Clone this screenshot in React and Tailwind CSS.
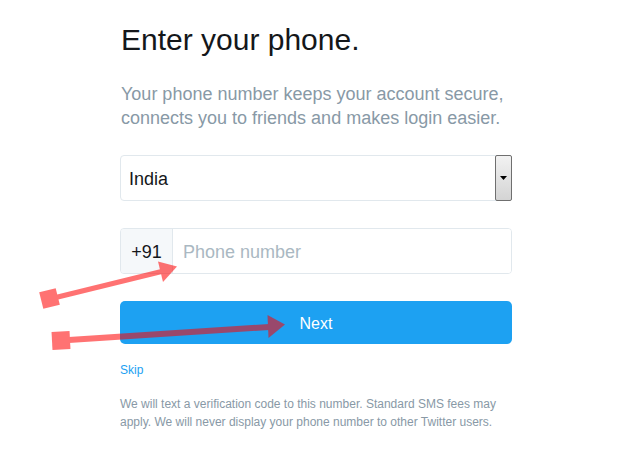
import React from 'react';

/**
 * PhoneStep
 * "Enter your phone" onboarding step with annotation arrows on top
 */
const Arrows = () => (
  <svg
    className="absolute inset-0 pointer-events-none"
    width="617"
    height="465"
    viewBox="0 0 617 465"
  >
    <g opacity="0.55" fill="#ff0000" stroke="none">
      {/* upper arrow */}
      <g>
        <rect x="41" y="290" width="17" height="17" transform="rotate(-14 49.5 298.5)" />
        <path d="M49 296.5 L161 269 L162.2 274 L50.2 301.5 Z" />
        <polygon points="177,266.5 158,261.5 163,282" />
      </g>
      {/* lower arrow */}
      <g>
        <rect x="52" y="331.5" width="18" height="18" transform="rotate(-3 61 340.5)" />
        <path d="M61 337.5 L269 324 L269.4 330 L61.4 343.5 Z" />
        <polygon points="285,324.5 267.5,315 268.5,338" />
      </g>
    </g>
  </svg>
);

const App = () => {
  return (
    <div
      className="relative w-[617px] h-[465px] bg-white overflow-hidden"
      style={{ fontFamily: '"Liberation Sans", Arial, sans-serif' }}
    >
      <div className="ml-[120px] w-[392px] pt-[22px] flex flex-col">
        <h1 className="text-[30px] leading-[36px] text-[#14171a] pl-px">
          Enter your phone.
        </h1>

        <p className="mt-[24px] text-[18px] leading-[24px] text-[#8899a6] pl-px">
          Your phone number keeps your account secure, connects you to friends and makes login easier.
        </p>

        {/* Country select */}
        <div className="mt-[25px] h-[46px] flex items-stretch border border-[#e1e8ed] rounded-[4px]">
          <div className="flex-1 flex items-center pl-[8px] pt-[2px] text-[18px] text-[#14171a]">
            India
          </div>
          <div className="w-[17px] -my-px -mr-px flex items-center justify-center border border-[#6f6f6f] rounded-[2px] bg-gradient-to-b from-[#f2f2f2] to-[#d4d4d4]">
            <svg width="7" height="4" viewBox="0 0 7 4">
              <polygon points="0,0 7,0 3.5,4" fill="#000" />
            </svg>
          </div>
        </div>

        {/* Phone number */}
        <div className="mt-[27px] h-[46px] flex items-stretch border border-[#e1e8ed] rounded-[4px] overflow-hidden">
          <div className="w-[52px] flex items-center justify-center pt-[2px] bg-[#f5f8fa] border-r border-[#e1e8ed] text-[18px] text-[#14171a]">
            +91
          </div>
          <input
            type="tel"
            placeholder="Phone number"
            className="flex-1 pl-[10px] pt-[2px] text-[18px] text-[#14171a] placeholder:text-[#aab8c2] outline-none bg-white"
          />
        </div>

        <button className="mt-[27px] h-[43px] pt-[2px] rounded-[5px] bg-[#1da1f2] text-white text-[16px] flex items-center justify-center">
          Next
        </button>

        <a href="#" className="mt-[18px] text-[12px] leading-[16px] text-[#1da1f2] self-start">
          Skip
        </a>

        <p className="mt-[17px] text-[12px] leading-[18px] text-[#8899a6]">
          We will text a verification code to this number. Standard SMS fees may apply. We will never display your phone number to other Twitter users.
        </p>
      </div>

      <Arrows />
    </div>
  );
};

export default App;
